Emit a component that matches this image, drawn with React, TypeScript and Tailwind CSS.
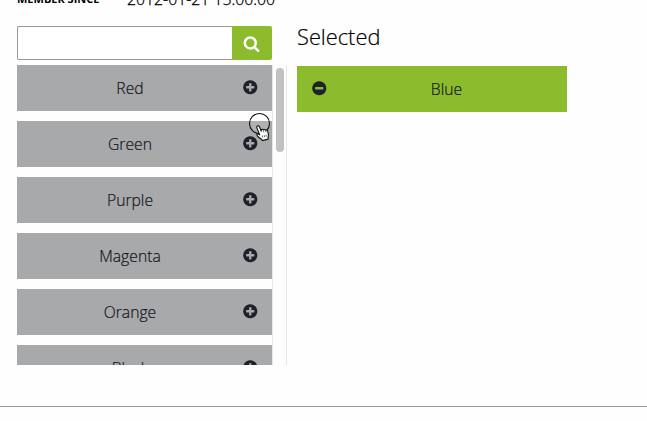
import React from "react";

const DISC =
  "m320-64q0 209-103 385.500t-279.500 279.500-385.500 103-385.500-103-279.500-279.500-103-385.500 103-385.500 279.500-279.500 385.500-103 385.500 103 279.500 279.500 103 385.500z";
const PLUS =
  "M1344 960v-128q0-26-19-45t-45-19h-256v-256q0-26-19-45t-45-19h-128q-26 0-45 19t-19 45v256h-256q-26 0-45 19t-19 45v128q0 26 19 45t45 19h256v256q0 26 19 45t45 19h128q26 0 45-19t19-45v-256h256q26 0 45-19t19-45z" +
  DISC;
const MINUS =
  "M1344 960v-128q0-26-19-45t-45-19h-768q-26 0-45 19t-19 45v128q0 26 19 45t45 19h768q26 0 45-19t19-45z" +
  DISC;
const SEARCH =
  "M1216 832q0-185-131.500-316.500t-316.500-131.500-316.500 131.500-131.500 316.500 131.500 316.500 316.500 131.500 316.500-131.500 131.500-316.500zm512 832q0 52-38 90t-90 38q-54 0-90-38l-343-342q-179 124-399 124-143 0-273.500-55.500t-225-150-150-225-55.500-273.500 55.500-273.500 150-225 225-150 273.500-55.500 273.500 55.500 225 150 150 225 55.500 273.500q0 220-124 399l343 343q37 37 37 90z";

function Icon({ d, className }: { d: string; className: string }) {
  return (
    <svg viewBox="0 0 1792 1792" fill="currentColor" className={className} aria-hidden="true">
      <path d={d} />
    </svg>
  );
}

function Option({ label }: { label: string }) {
  return (
    <li className="grid h-[46px] shrink-0 grid-cols-[1px_1fr_30px] items-center bg-[#a8a9ab] text-[15.700px] text-[#1e202a]">
      <span className="col-start-2 pt-[2px] text-center text-[#14151c] [-webkit-text-stroke:0.2px]">{label}</span>
      <Icon d={PLUS} className="-ml-[0.500px] mb-[1.500px] size-[16.500px]" />
    </li>
  );
}

function Pointer() {
  return (
    <svg className="pointer-events-none absolute left-[248px] top-[112px]" width="24" height="32" viewBox="0 0 24 32">
      <circle cx="11.500" cy="11.500" r="10" fill="#fff" fillOpacity="0.100" stroke="#111" strokeWidth="1.100" />
      <path
        d="M9.300 14c.8-.6 1.700-.2 2.100.7l1.900 4.500v-1.400c.5-.9 1.700-.7 2.200.2.600-.8 1.700-.6 2.200.3.700-.6 1.600-.2 1.900.6l.8 3.400c.2 1.300-.1 2.200-.3 3.200l.1 1.600-5.900 1.500-.7-1.400c-1.200-.8-2.900-1.600-4.300-3.300-.7-.8-.5-1.500.1-1.800.8-.3 1.500.2 2.300.8l-2.800-7c-.3-.8-.2-1.500.4-1.900z"
        fill="#fff"
        stroke="#111"
        strokeWidth="1.100"
        strokeLinejoin="round"
      />
      <path d="M15.500 18.500l.3 1.800M17.700 18.500l.3 1.800M14.300 23.500l.4 2M16.200 23.100l.4 2M18 22.700l.4 2" fill="none" stroke="#111" strokeWidth=".6" />
    </svg>
  );
}

export default function App() {
  return (
    <div className="relative h-[421px] w-[647px] overflow-hidden bg-[#fefefe] font-['Open_Sans','Noto_Sans',sans-serif] text-base font-light text-black">
      <div className="flex h-[407px] flex-col border-b border-[#999]">
        <div className="-mt-[13px] flex h-[39px] shrink-0 items-start pl-[17px]">
          <span className="w-[110px] pt-[4px] text-[11px] leading-4 font-bold whitespace-nowrap">MEMBER SINCE</span>
          <span className="text-[15.8px] leading-6 whitespace-nowrap [-webkit-text-stroke:0.3px]">2012-01-21 15:00:00</span>
        </div>

        <div className="flex pl-[17px]">
          <section className="flex w-[270px] flex-col gap-[5px]">
            <div className="flex h-[34px] w-[255px]">
              <input
                aria-label="Search"
                className="min-w-0 flex-1 rounded-l-[2px] border border-r-0 border-[#999] bg-white px-2 outline-none"
              />
              <button aria-label="Search" className="flex w-10 items-center justify-center rounded-r-[2px] bg-[#8cbc2d] pr-[1px] text-white">
                <Icon d={SEARCH} className="size-[17px]" />
              </button>
            </div>
            <div className="flex h-[300px] overflow-hidden">
              <ul className="flex w-[255px] flex-col gap-[10px]">
                {["Red", "Green", "Purple", "Magenta", "Orange", "Black"].map((label) => (
                  <Option key={label} label={label} />
                ))}
              </ul>
              <div className="w-[15px] border-x border-[#e6e6e6] bg-[#fdfdfd] px-[3px] pt-[3px]">
                <div className="h-[84px] w-2 rounded-full bg-[#c1c1c1]" />
              </div>
            </div>
          </section>

          <section className="w-[280px] pl-[10px]">
            <h2 className="-mt-[4px] h-[44px] text-[21.800px] leading-[30px] [-webkit-text-stroke:0.2px]">Selected</h2>
            <div className="grid h-[46px] grid-cols-[30px_1fr_1px] items-center bg-[#8cbc2d] text-[15.700px] text-[#1e202a]">
              <Icon d={MINUS} className="mb-[1.500px] ml-[13.500px] size-[16.500px]" />
              <span className="pt-[2px] text-center text-[#14151c] [-webkit-text-stroke:0.2px]">Blue</span>
            </div>
          </section>
        </div>
      </div>
      <Pointer />
    </div>
  );
}
